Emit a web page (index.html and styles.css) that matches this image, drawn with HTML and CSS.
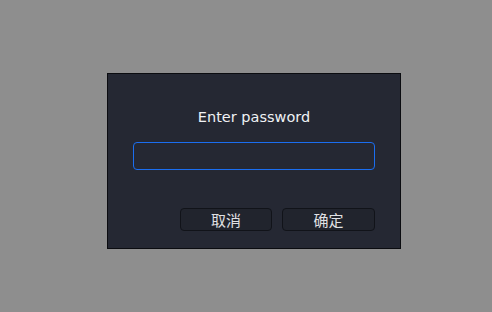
FILE: index.html
```html
<!DOCTYPE html>
<html>
<head>
<meta charset="utf-8">
<link rel="stylesheet" href="styles.css">
</head>
<body>
<div class="dialog">
  <div class="title">Enter password</div>
  <div class="field"></div>
  <div class="actions">
    <button class="btn cancel">取消</button>
    <button class="btn ok">确定</button>
  </div>
</div>
</body>
</html>
```
FILE: styles.css
```css
html, body {
  margin: 0;
  padding: 0;
  background: #8e8e8e;
  width: 492px;
  height: 312px;
  overflow: hidden;
}
.dialog {
  box-sizing: border-box;
  width: 294px;
  height: 176px;
  margin: 73px 0 0 107px;
  background: #252833;
  border: 1px solid #0b0c10;
  padding: 35px 25px 0 25px;
  display: flex;
  flex-direction: column;
}
.title {
  font-family: "DejaVu Sans", sans-serif;
  font-size: 14.5px;
  line-height: 17px;
  color: #f0f2f5;
  text-align: center;
}
.field {
  box-sizing: border-box;
  margin-top: 16px;
  height: 28px;
  border: 1px solid #1b6ef0;
  border-radius: 4px;
  background: #252833;
}
.actions {
  margin-top: 38px;
  display: flex;
  justify-content: flex-end;
  gap: 10px;
}
.btn {
  box-sizing: border-box;
  height: 23px;
  border: 1px solid #111319;
  border-radius: 4px;
  background: #21242d;
  color: #e0e1e4;
  font-family: "Noto Sans CJK SC", sans-serif;
  font-size: 15px;
  line-height: 20px;
  padding: 0;
}
.cancel { width: 92px; }
.ok { width: 93px; }
```
